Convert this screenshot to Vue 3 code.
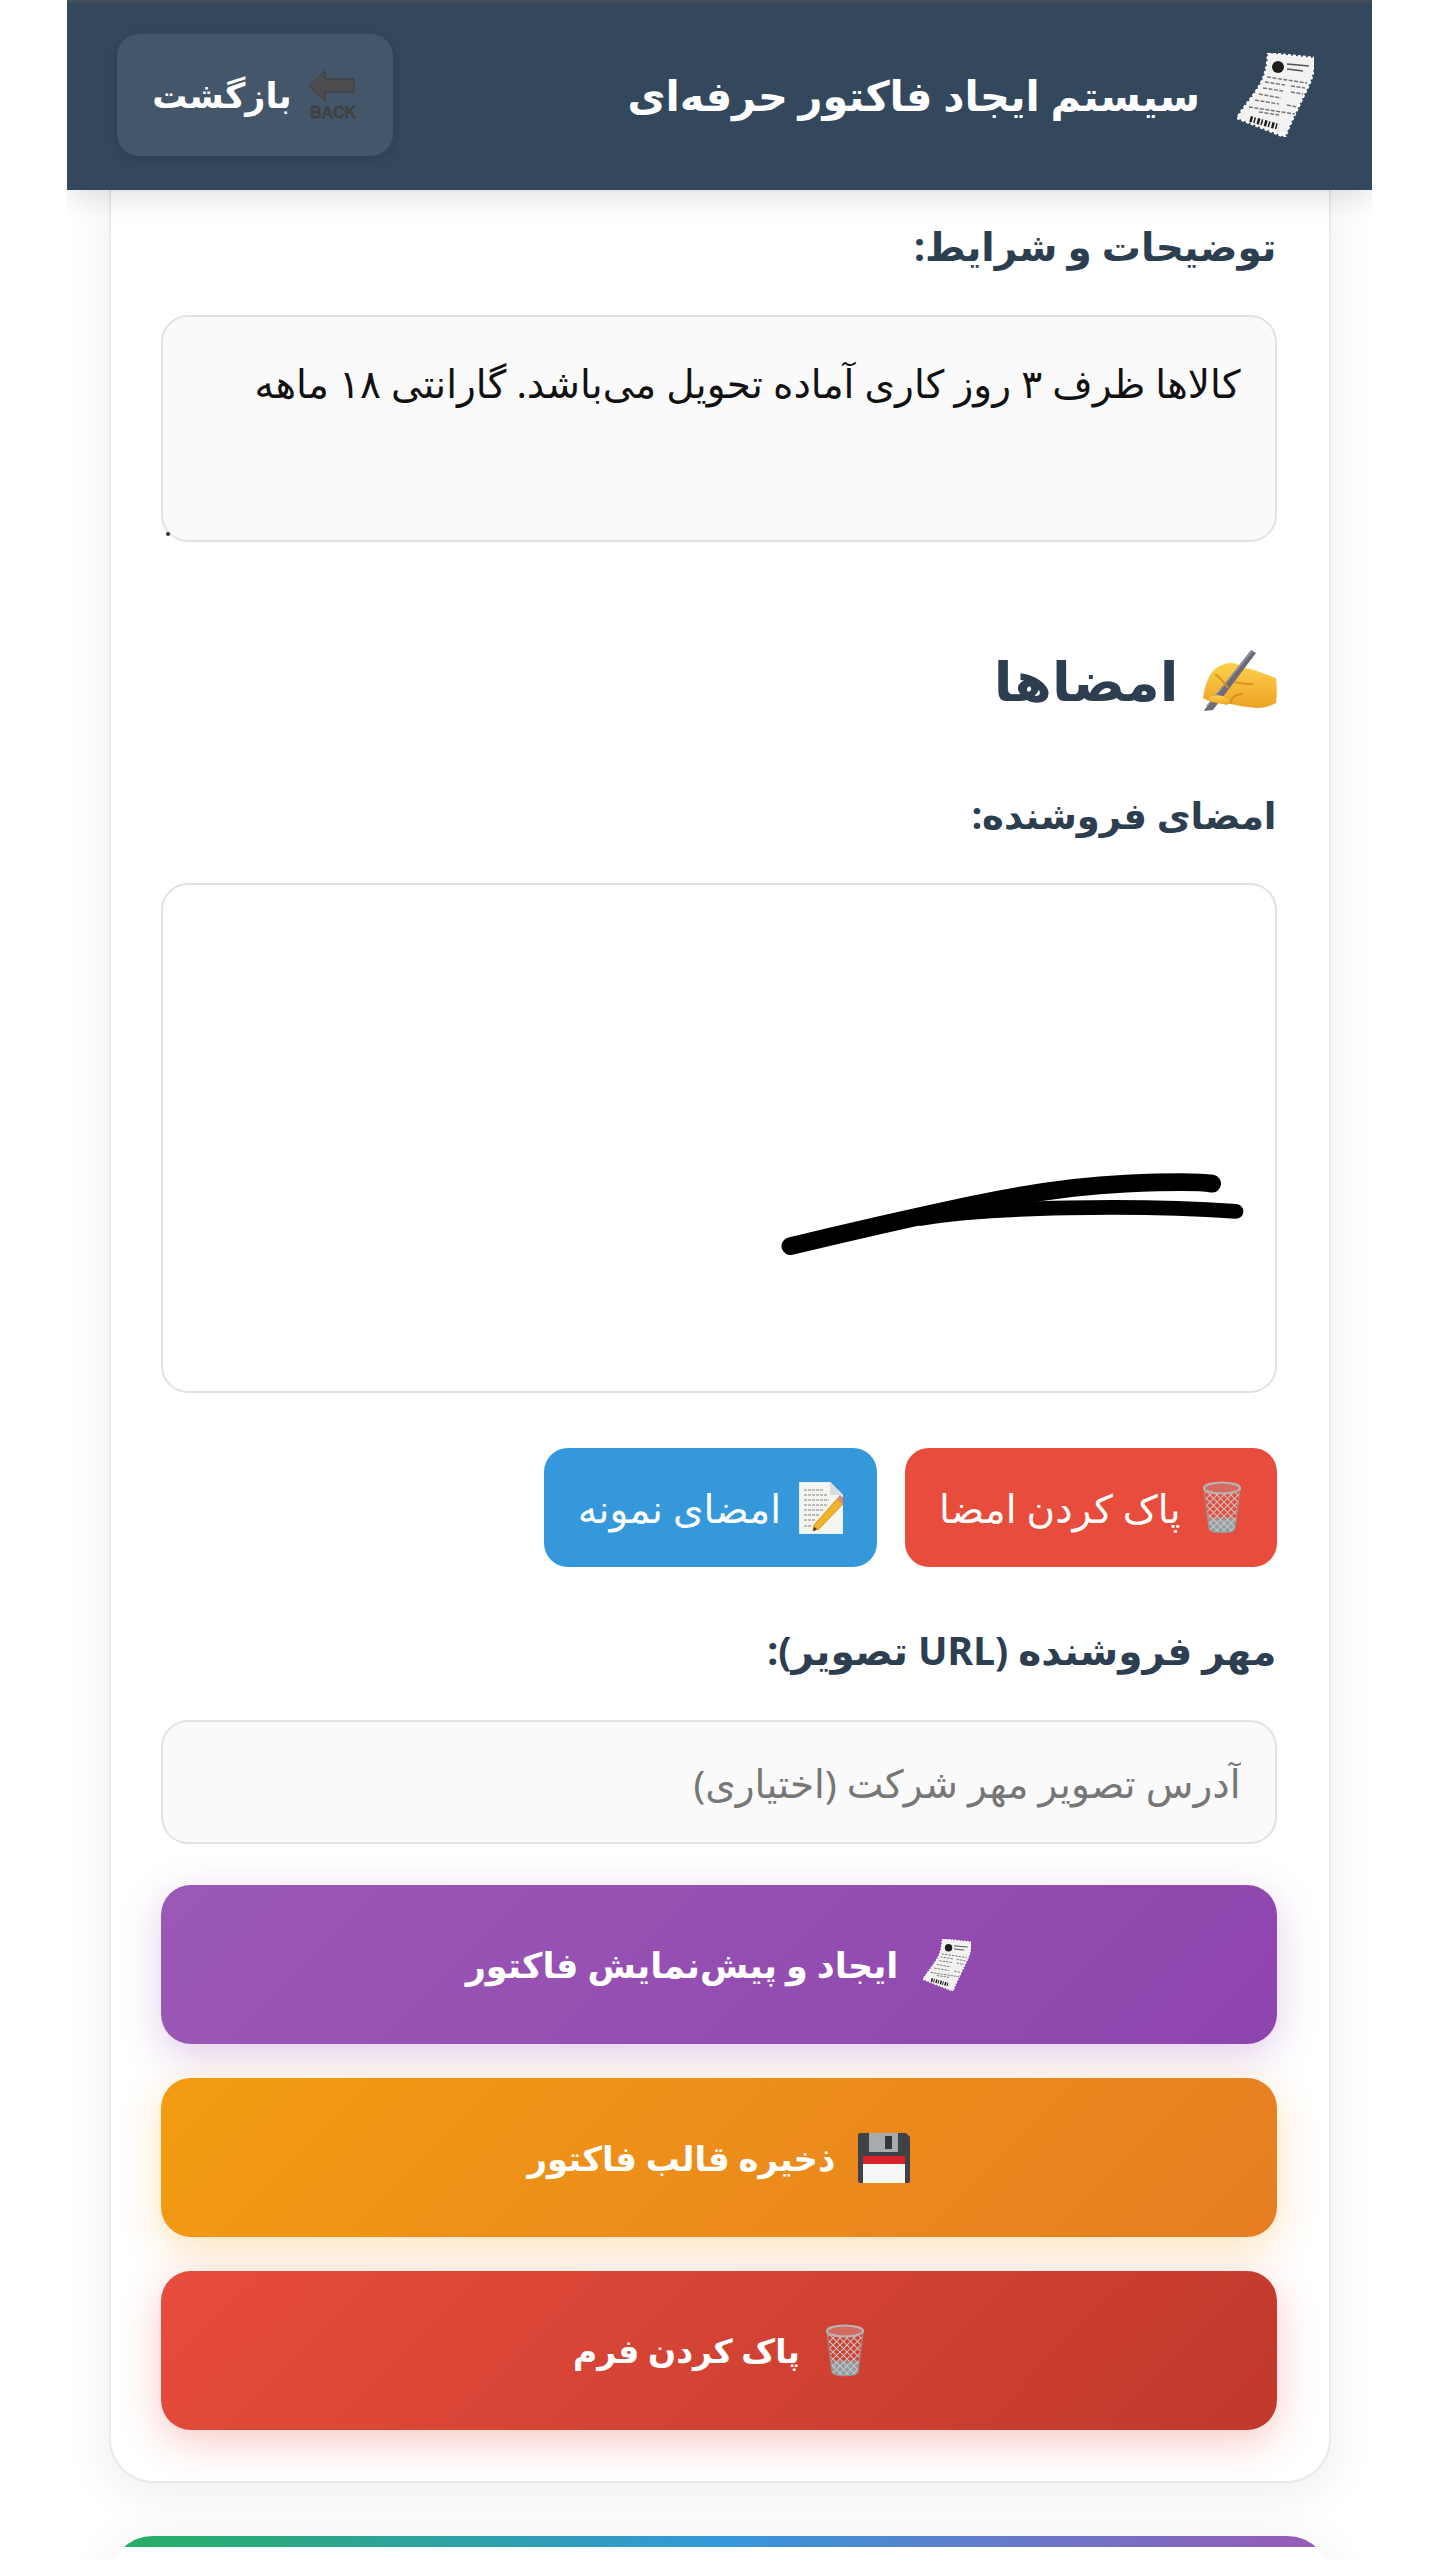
<script setup>
const receiptLines = [
  'M30 24 L70 30', 'M28 29 L48 32', 'M54 33 L68 35', 'M26 35 L46 38', 'M54 39 L66 41',
  'M22 41 L44 45', 'M18 47 L42 51', 'M50 52 L60 54', 'M12 54 L58 61', 'M22 59 L42 62'
]
</script>

<template>
  <div class="page" dir="rtl">
    <div class="shell">
      <header class="top">
        <h1 class="title">
          <svg class="ico ico-title" viewBox="0 0 77 84" aria-hidden="true"><use href="#receipt" /></svg>
          <span>سیستم ایجاد فاکتور حرفه‌ای</span>
        </h1>
        <button class="back" type="button">
          <svg class="ico ico-back" viewBox="0 0 50 48" aria-hidden="true">
            <path d="M1 15 L17 0 V8 H46 V21 H17 V30 Z" fill="#4d4d4d" stroke="#3a3a3a" stroke-width="1" />
            <text x="25" y="47" text-anchor="middle" direction="ltr" class="back-text">BACK</text>
          </svg>
          <span class="back-label">بازگشت</span>
        </button>
      </header>

      <svg width="0" height="0" class="defs" aria-hidden="true">
        <defs>
          <g id="receipt">
            <path d="M31 0 L77 5 C78 18 74 28 67 42 C60 57 53 70 48 84 L0 65 C8 52 18 42 25 28 C29 19 31 10 31 0 Z" fill="#f2f2f0" stroke="#fff" stroke-width="2.5" stroke-dasharray="3 2" />
            <circle cx="41" cy="14" r="6" fill="#1f1f1f" />
            <path d="M50 11 L72 13 M50 16 L66 18" stroke="#555" stroke-width="1.6" fill="none" />
            <path v-for="(d, i) in receiptLines" :key="i" :d="d" stroke="#777" stroke-width="1.5" stroke-dasharray="4 1.5" fill="none" />
            <path d="M13 66 L42 74" stroke="#1c1c1c" stroke-width="6" stroke-dasharray="2.5 1.5 1.5 2" fill="none" />
          </g>
          <pattern id="net" width="7" height="7" patternUnits="userSpaceOnUse">
            <path d="M0 0 L7 7 M7 0 L0 7" stroke="#c9c3c3" stroke-width="1.1" />
          </pattern>
          <linearGradient id="can" x1="0" y1="0" x2="0" y2="1">
            <stop offset="0.62" stop-color="#8fa1a6" stop-opacity="0" />
            <stop offset="0.72" stop-color="#8fa1a6" stop-opacity="0.95" />
            <stop offset="1" stop-color="#8a9ca2" />
          </linearGradient>
          <g id="trash">
            <path d="M1 7 L6 48 C7 53 31 53 32 48 L37 7 Z" fill="url(#can)" />
            <path d="M1 7 L6 48 C7 53 31 53 32 48 L37 7 Z" fill="url(#net)" />
            <path d="M1 7 L6 48 C7 53 31 53 32 48 L37 7" fill="none" stroke="#9a8f8f" stroke-width="1.2" />
            <ellipse cx="19" cy="7" rx="18" ry="5.5" fill="#d46a60" stroke="#b9b4b4" stroke-width="2.2" />
          </g>
          <linearGradient id="skin" x1="0" y1="0" x2="0" y2="1">
            <stop offset="0" stop-color="#fbd24d" />
            <stop offset="1" stop-color="#eda324" />
          </linearGradient>
        </defs>
      </svg>

      <main class="card">
        <section class="field first">
          <label class="label">توضیحات و شرایط:</label>
          <div class="area-wrap">
            <textarea class="control area" readonly>کالاها ظرف ۳ روز کاری آماده تحویل می‌باشد. گارانتی ۱۸ ماهه</textarea>
            <i class="grip"></i>
          </div>
        </section>

        <h2 class="section-title">
          <svg class="ico ico-hand" viewBox="0 0 76 64" aria-hidden="true">
            <path d="M2 50 C4 36 8 26 14 21 C22 15 30 14 36 16 L43 20 C52 21 62 25 75 30 C76 38 76 48 75 55 C66 60 56 61 49 59 C42 59 36 57 30 56 C20 56 8 54 2 50 Z" fill="url(#skin)" />
            <path d="M4 61 L50 2 L55 5 L12 62 L3 63 Z" fill="#6f6a78" />
            <path d="M6 58 L51 3" stroke="#96919f" stroke-width="1.5" />
            <path d="M14 26 C20 30 24 36 27 40 M29 56 C30 50 33 46 42 46 M34 34 C40 36 48 36 52 36" fill="none" stroke="#d98f1f" stroke-width="1.8" />
            <path d="M8 50 C14 46 22 46 28 52 C30 56 26 58 22 56 L10 54 Z" fill="url(#skin)" />
          </svg>
          <span>امضاها</span>
        </h2>

        <section class="field sign">
          <label class="label label-sign">امضای فروشنده:</label>
          <div class="canvas">
            <svg class="stroke" viewBox="0 0 1114 510" aria-hidden="true">
              <g fill="none" stroke="#000" stroke-linecap="round">
                <path d="M629 364 Q 720 342 809 323 T 967 301 T 1054 301" stroke-width="18" />
                <path d="M760 336 C 830 324, 980 322, 1078 329" stroke-width="15" />
              </g>
            </svg>
          </div>
          <div class="sign-actions">
            <button class="mini mini-red" type="button">
              <svg class="ico ico-mini" viewBox="0 0 38 54" aria-hidden="true"><use href="#trash" /></svg>
              <span>پاک کردن امضا</span>
            </button>
            <button class="mini mini-blue" type="button">
              <svg class="ico ico-memo" viewBox="0 0 44 52" aria-hidden="true">
                <path d="M0 0 H31 L44 13 V52 H0 Z" fill="#f5f5f0" stroke="#d8dde0" stroke-width="0.8" />
                <path d="M31 0 V13 H44 Z" fill="#d9dde0" />
                <path d="M5 8 H24 M5 13 H28 M5 18 H30 M5 23 H28 M5 28 H24 M5 33 H20 M5 38 H16 M5 44 H13" stroke="#a9a9a4" stroke-width="1.4" stroke-dasharray="3 1" />
                <path d="M15 43 L38 17 L44 22 L20 47 L14 49 Z" fill="#f0b32b" stroke="#c98a1c" stroke-width="0.8" />
                <path d="M38 17 L41 13 L47 18 L44 22 Z" fill="#d98a6a" />
                <path d="M14 49 L15 45 L18 47 Z" fill="#333" />
              </svg>
              <span>امضای نمونه</span>
            </button>
          </div>
        </section>

        <section class="field stamp">
          <label class="label">مهر فروشنده (URL تصویر):</label>
          <input class="control line" type="text" placeholder="آدرس تصویر مهر شرکت (اختیاری)" />
        </section>

        <div class="actions">
          <button class="big big-purple" type="button">
            <svg class="ico ico-big-receipt" viewBox="0 0 77 84" aria-hidden="true"><use href="#receipt" /></svg>
            <span>ایجاد و پیش‌نمایش فاکتور</span>
          </button>
          <button class="big big-orange" type="button">
            <svg class="ico ico-floppy" viewBox="0 0 52 50" aria-hidden="true">
              <path d="M0 2 C0 1 1 0 2 0 H48 L52 4 V48 C52 49 51 50 50 50 H2 C1 50 0 49 0 48 Z" fill="#3f4347" />
              <rect x="11" y="0" width="29" height="19" fill="#a7abae" />
              <rect x="27" y="3" width="7" height="13" fill="#33373b" />
              <rect x="5" y="23" width="42" height="8" fill="#d8232a" />
              <rect x="5" y="31" width="42" height="19" fill="#f8f8f8" />
            </svg>
            <span>ذخیره قالب فاکتور</span>
          </button>
          <button class="big big-red" type="button">
            <svg class="ico ico-big-trash" viewBox="0 0 38 54" aria-hidden="true"><use href="#trash" /></svg>
            <span>پاک کردن فرم</span>
          </button>
        </div>
      </main>

      <div class="next-card"></div>
    </div>
  </div>
</template>

<style>
html, body { margin: 0; background: #fff; }
</style>

<style scoped>
.page {
  width: 1439px;
  height: 2560px;
  overflow: hidden;
  font-family: "Noto Sans", "DejaVu Sans", sans-serif;
  background: #fff;
}
.shell {
  width: 1305px;
  margin: 0 auto;
  height: 2560px;
  overflow: hidden;
  background: #fff;
}
.defs { position: absolute; }
.ico { display: block; flex: none; }
.top {
  position: relative;
  z-index: 2;
  height: 190px;
  box-sizing: border-box;
  padding: 0 50px;
  display: flex;
  align-items: center;
  justify-content: space-between;
  background: linear-gradient(#4a5058, #33485d 4px);
  box-shadow: 0 6px 28px rgba(0, 0, 0, 0.14);
}
.title {
  margin: 0;
  padding-right: 8px;
  display: flex;
  align-items: center;
  gap: 37px;
  color: #fff;
  font-size: 41.5px;
  font-weight: 700;
}
.ico-title { width: 77px; height: 84px; }
.back {
  width: 276px;
  height: 122px;
  padding: 0;
  display: flex;
  align-items: center;
  justify-content: center;
  gap: 16px;
  border: 0;
  border-radius: 22px;
  background: #445669;
  box-shadow: 0 3px 12px rgba(0, 0, 0, 0.14);
  color: #fff;
  font: 700 35px / 1.6 "Noto Sans", "DejaVu Sans", sans-serif;
}
.back-label { white-space: nowrap; }
.ico-back { width: 50px; height: 48px; overflow: visible; }
.back-text { font: 700 16px "Liberation Sans", sans-serif; fill: #454545; stroke: #333; stroke-width: 0.4; }

.card {
  width: 1222px;
  margin: 0 auto;
  box-sizing: border-box;
  padding: 0 52px 51px 50px;
  background: #fff;
  border: 2px solid #e9e9e9;
  border-top: 0;
  border-radius: 0 0 44px 44px;
  box-shadow: 0 8px 50px rgba(0, 0, 0, 0.08);
}
.field { display: block; }
.label {
  display: block;
  color: #2c3e50;
  font-size: 39px;
  font-weight: 700;
  line-height: 60px;
}
.label-sign { font-size: 37px; }
.first { padding-top: 26px; }
.first .label { margin-bottom: 39px; }
.area-wrap { position: relative; }
.control {
  display: block;
  width: 100%;
  box-sizing: border-box;
  border: 2px solid #e2e2e2;
  border-radius: 27px;
  background: #fafafa;
  font-family: "Noto Sans", "DejaVu Sans", sans-serif;
  font-size: 39px;
  color: #111;
  padding: 0 34px;
  outline: none;
  direction: rtl;
}
.area {
  height: 227px;
  padding-top: 40px;
  line-height: 52px;
  resize: none;
  overflow: hidden;
}
.grip {
  position: absolute;
  left: 5px;
  bottom: 6px;
  width: 4px;
  height: 4px;
  border-radius: 50%;
  background: #333;
}
.section-title {
  margin: 101px 0 0;
  display: flex;
  align-items: center;
  gap: 22px;
  color: #2c3e50;
  font-size: 54.5px;
  font-weight: 700;
  line-height: 74px;
}
.ico-hand { width: 76px; height: 64px; }
.sign { margin-top: 68px; }
.sign .label { margin-bottom: 38px; }
.canvas {
  height: 510px;
  box-sizing: border-box;
  border: 2px solid #e2e2e2;
  border-radius: 27px;
  background: #fff;
  overflow: hidden;
}
.stroke { display: block; width: 100%; height: 100%; filter: blur(0.7px); }
.sign-actions {
  display: flex;
  gap: 28px;
  margin-top: 55px;
}
.mini {
  height: 119px;
  display: flex;
  align-items: center;
  gap: 18px;
  padding: 0 34px;
  border: 0;
  border-radius: 24px;
  color: #fff;
  font: 400 39px "Noto Sans", "DejaVu Sans", sans-serif;
}
.mini-red { background: #e74c3c; gap: 22px; padding-right: 36px; }
.mini-blue { background: #3498db; }
.ico-mini { width: 38px; height: 54px; }
.ico-memo { width: 44px; height: 52px; }
.stamp { margin-top: 53px; }
.stamp .label { margin-bottom: 40px; }
.line { height: 124px; }
.line::placeholder { color: #777; opacity: 1; }
.actions {
  margin-top: 41px;
  display: flex;
  flex-direction: column;
  gap: 34px;
}
.big {
  height: 159px;
  display: flex;
  align-items: center;
  justify-content: center;
  gap: 25px;
  border: 0;
  border-radius: 30px;
  color: #fff;
  font: 700 35px "Noto Sans", "DejaVu Sans", sans-serif;
}
.ico-big-receipt { width: 48px; height: 52px; }
.ico-floppy { width: 52px; height: 50px; }
.ico-big-trash { width: 38px; height: 54px; }
.big-purple {
  background: linear-gradient(135deg, #9b59b6, #8e44ad);
  box-shadow: 0 11px 40px rgba(155, 89, 182, 0.3);
}
.big-orange {
  background: linear-gradient(135deg, #f39c12, #e67e22);
  box-shadow: 0 11px 40px rgba(243, 156, 18, 0.3);
  font-size: 34px;
  gap: 22px;
}
.big-red {
  background: linear-gradient(135deg, #e74c3c, #c0392b);
  box-shadow: 0 11px 40px rgba(231, 76, 60, 0.3);
  font-size: 33px;
  gap: 26px;
}
.next-card {
  width: 1222px;
  margin: 53px auto 0;
  height: 60px;
  box-sizing: border-box;
  border-radius: 44px 44px 0 0;
  background: #fff;
  box-shadow: 0 8px 50px rgba(0, 0, 0, 0.08);
  overflow: hidden;
}
.next-card::before {
  content: "";
  display: block;
  height: 11px;
  background: linear-gradient(90deg, #27ae60, #3498db, #9b59b6);
}
</style>
